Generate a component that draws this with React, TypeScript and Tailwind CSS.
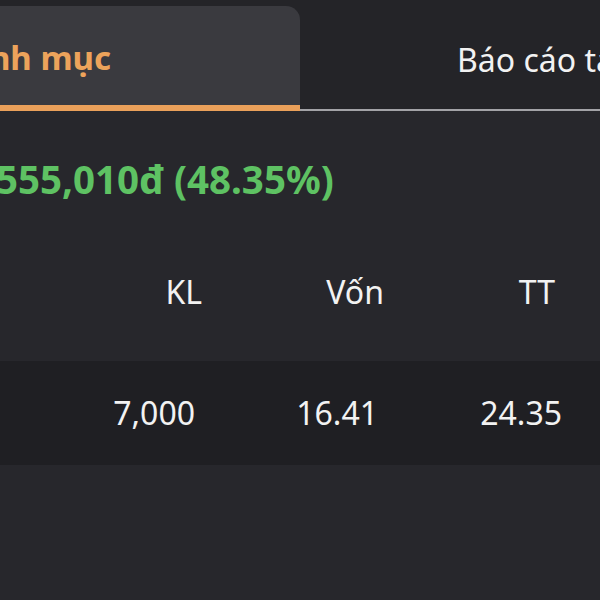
import React from "react";

export default function App() {
  return (
    <div
      className="w-[600px] h-[600px] overflow-hidden bg-[#27272c] text-[#f2f2f2]"
      style={{ fontFamily: '"Noto Sans", "Open Sans", sans-serif' }}
    >
      {/* tabs */}
      <div className="flex h-[111px] pt-[6px] bg-[#242428]">
        <div className="w-[300px] shrink-0 bg-[#3a3a3f] rounded-tr-[14px] border-b-[6px] border-[#eaa05a] flex items-center">
          <span className="-ml-[55px] mt-[4px] whitespace-nowrap text-[33px] font-bold text-[#eda35b]">
            Danh mục
          </span>
        </div>
        <div className="flex-1 flex items-center border-b-2 border-[#a3a3a7] pl-[157px] pt-[4px]">
          <span className="whitespace-nowrap text-[32px] font-normal">Báo cáo tài sản</span>
        </div>
      </div>

      {/* profit */}
      <div className="h-[137px] flex items-center">
        <span className="-ml-[4px] whitespace-nowrap text-[38.5px] font-bold text-[#5ec263]">
          555,010đ (48.35%)
        </span>
      </div>

      {/* header row */}
      <div className="h-[113px] flex items-center pb-[26px] text-[32px]">
        <div className="w-[202px] text-right">KL</div>
        <div className="w-[182px] text-right">Vốn</div>
        <div className="w-[171px] text-right">TT</div>
      </div>

      {/* data row */}
      <div className="h-[104px] flex items-center bg-[#1f1f23] text-[32px]">
        <div className="w-[195px] text-right">7,000</div>
        <div className="w-[183px] text-right">16.41</div>
        <div className="w-[184px] text-right">24.35</div>
      </div>
    </div>
  );
}
